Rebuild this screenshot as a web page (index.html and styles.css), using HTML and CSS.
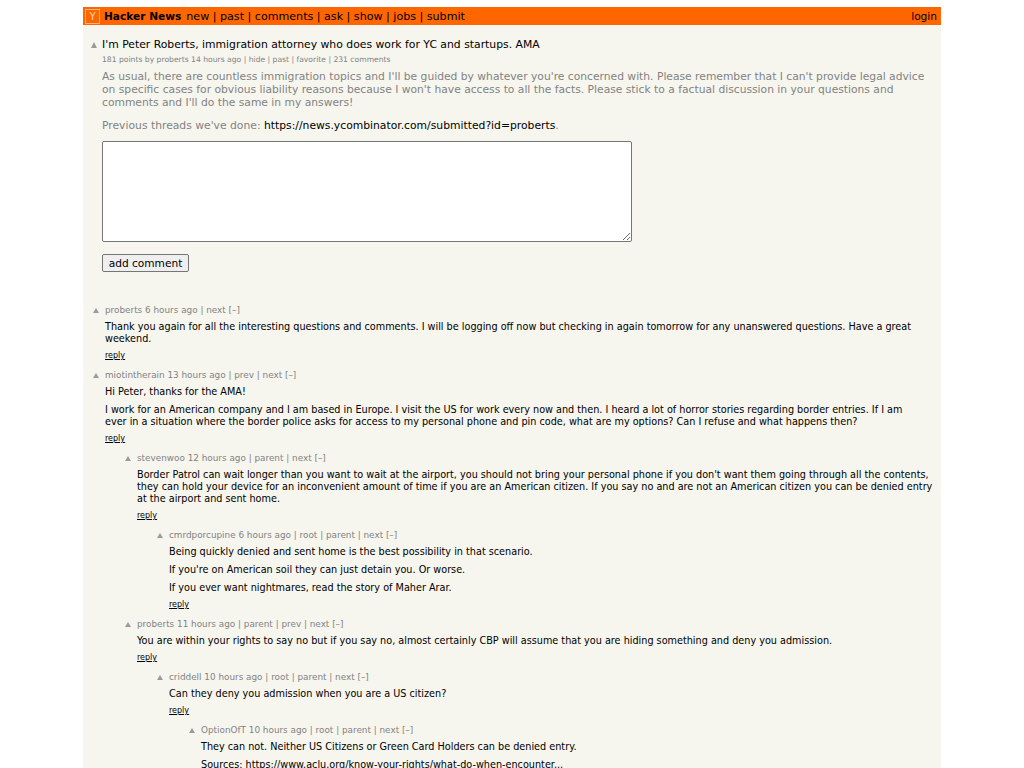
FILE: index.html
```html
<!DOCTYPE html>
<html lang="en">
<head>
  <meta charset="UTF-8" />
  <title>I'm Peter Roberts, immigration attorney who does work for YC and startups. AMA | Hacker News</title>
  <link rel="stylesheet" href="styles.css">
</head>
<body>
  <div class="page">
    <div class="header">
      <span class="logo">Y</span>
      <b class="site">Hacker News</b>
      <span class="nav">new | past | comments | ask | show | jobs | submit</span>
      <span class="login">login</span>
    </div>

    <div class="story">
      <div class="title-row">
        <span class="arrow"></span>
        <span class="title">I'm Peter Roberts, immigration attorney who does work for YC and startups. AMA</span>
      </div>
      <div class="subtext">181 points by proberts 14 hours ago | hide | past | favorite | 231 comments</div>
      <div class="story-text">
        <p>As usual, there are countless immigration topics and I'll be guided by whatever you're concerned with. Please remember that I can't provide legal advice on specific cases for obvious liability reasons because I won't have access to all the facts. Please stick to a factual discussion in your questions and comments and I'll do the same in my answers!</p>
        <p>Previous threads we've done: <a href="#">https://news.ycombinator.com/submitted?id=proberts</a>.</p>
      </div>
      <textarea class="reply-box"></textarea>
      <button class="add-btn">add comment</button>
    </div>

    <div class="comments">
      <div class="comment level0">
        <span class="arrow"></span>
        <div class="body">
          <div class="meta">proberts 6 hours ago | next [–]</div>
          <p>Thank you again for all the interesting questions and comments. I will be logging off now but checking in again tomorrow for any unanswered questions. Have a great weekend.</p>
          <a class="reply" href="#">reply</a>
        </div>
      </div>

      <div class="comment level0">
        <span class="arrow"></span>
        <div class="body">
          <div class="meta">miotintherain 13 hours ago | prev | next [–]</div>
          <p>Hi Peter, thanks for the AMA!</p>
          <p>I work for an American company and I am based in Europe. I visit the US for work every now and then. I heard a lot of horror stories regarding border entries. If I am ever in a situation where the border police asks for access to my personal phone and pin code, what are my options? Can I refuse and what happens then?</p>
          <a class="reply" href="#">reply</a>
        </div>
      </div>

      <div class="comment level1">
        <span class="arrow"></span>
        <div class="body">
          <div class="meta">stevenwoo 12 hours ago | parent | next [–]</div>
          <p>Border Patrol can wait longer than you want to wait at the airport, you should not bring your personal phone if you don't want them going through all the contents, they can hold your device for an inconvenient amount of time if you are an American citizen. If you say no and are not an American citizen you can be denied entry at the airport and sent home.</p>
          <a class="reply" href="#">reply</a>
        </div>
      </div>

      <div class="comment level2">
        <span class="arrow"></span>
        <div class="body">
          <div class="meta">cmrdporcupine 6 hours ago | root | parent | next [–]</div>
          <p>Being quickly denied and sent home is the best possibility in that scenario.</p>
          <p>If you're on American soil they can just detain you. Or worse.</p>
          <p>If you ever want nightmares, read the story of Maher Arar.</p>
          <a class="reply" href="#">reply</a>
        </div>
      </div>

      <div class="comment level1">
        <span class="arrow"></span>
        <div class="body">
          <div class="meta">proberts 11 hours ago | parent | prev | next [–]</div>
          <p>You are within your rights to say no but if you say no, almost certainly CBP will assume that you are hiding something and deny you admission.</p>
          <a class="reply" href="#">reply</a>
        </div>
      </div>

      <div class="comment level2">
        <span class="arrow"></span>
        <div class="body">
          <div class="meta">criddell 10 hours ago | root | parent | next [–]</div>
          <p>Can they deny you admission when you are a US citizen?</p>
          <a class="reply" href="#">reply</a>
        </div>
      </div>

      <div class="comment level3">
        <span class="arrow"></span>
        <div class="body">
          <div class="meta">OptionOfT 10 hours ago | root | parent | next [–]</div>
          <p>They can not. Neither US Citizens or Green Card Holders can be denied entry.</p>
          <p>Sources: <a href="#">https://www.aclu.org/know-your-rights/what-do-when-encounter...</a></p>
        </div>
      </div>
    </div>
  </div>
</body>
</html>
```

FILE: styles.css
```css
html, body {
  height: 768px;
  overflow: hidden;
}

body {
  margin: 0;
  padding-top: 7px;
  background: #fff;
  font-family: "DejaVu Sans", Verdana, sans-serif;
  color: #000;
}

a {
  color: #000;
  text-decoration: none;
}

p {
  margin: 0;
}

.page {
  width: 858px;
  margin-left: 83px;
  background: #f6f6ef;
  min-height: 761px;
}

.header {
  display: flex;
  align-items: center;
  height: 18px;
  background: #ff6600;
  padding: 0 4px 0 2px;
  font-size: 10.6px;
}

.logo {
  width: 13px;
  height: 13px;
  border: 1px solid #fbb47c;
  color: #ffd8b0;
  font-size: 10px;
  line-height: 13px;
  text-align: center;
  box-sizing: content-box;
  margin-right: 4px;
}

.site {
  margin-right: 5px;
}

.nav {
  font-size: 11.1px;
}

.login {
  margin-left: auto;
}

.story {
  padding: 13px 0 0 8px;
}

.title-row {
  display: flex;
  align-items: center;
}

.arrow {
  display: block;
  flex: none;
  width: 0;
  height: 0;
  border-left: 3.5px solid transparent;
  border-right: 3.5px solid transparent;
  border-bottom: 6px solid #9a9a9a;
}

.title {
  font-size: 10.82px;
  margin-left: 5px;
}

.subtext {
  margin: 3px 0 0 11px;
  font-size: 7.63px;
  line-height: 12px;
  color: #828282;
}

.story-text {
  margin: 4px 4px 0 11px;
  font-size: 10.72px;
  line-height: 13px;
  color: #828282;
}

.story-text p + p {
  margin-top: 10px;
  font-size: 10.78px;
}

.reply-box {
  display: block;
  box-sizing: border-box;
  width: 530px;
  height: 101px;
  margin: 9px 0 0 11px;
  background: #fff;
  border: 1px solid #767676;
  border-radius: 2px;
}

.add-btn {
  display: block;
  box-sizing: border-box;
  width: 87px;
  height: 18px;
  margin: 12px 0 0 11px;
  padding: 0;
  background: #efefef;
  border: 1px solid #767676;
  border-radius: 2px;
  font-family: inherit;
  font-size: 10.6px;
}

.comments {
  padding: 33px 7px 0 10px;
}

.comment {
  display: flex;
  gap: 6px;
  margin-bottom: 9px;
}

.comment > .arrow {
  margin-top: 3px;
  border-left-width: 3px;
  border-right-width: 3px;
  border-bottom-width: 5px;
}

.level0 {
  padding-right: 9px;
}

.level1 {
  padding-left: 32px;
}

.level2 {
  padding-left: 64px;
}

.level3 {
  padding-left: 96px;
}

.meta {
  font-size: 8.85px;
  line-height: 11px;
  color: #828282;
  margin-bottom: 5px;
}

.body p {
  font-size: 9.68px;
  line-height: 12px;
  margin-bottom: 6px;
}

.reply {
  display: block;
  font-size: 8px;
  line-height: 10px;
  text-decoration: underline;
}
```
